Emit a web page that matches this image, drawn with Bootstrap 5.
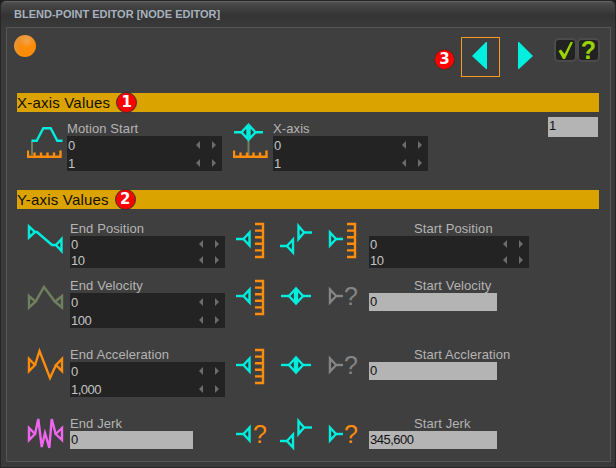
<!DOCTYPE html>
<html lang="en">
<head>
  <meta charset="UTF-8">
  <title>Blend-Point Editor</title>
  <link href="https://cdn.jsdelivr.net/npm/bootstrap@5.3.0/dist/css/bootstrap.min.css" rel="stylesheet">
  <style>
    html, body { margin: 0; background: #1e1e1e; }
    body { font-family: "Liberation Sans", Arial, sans-serif; overflow: hidden; }

    .wnd {
      width: 616px; height: 468px;
      border: 1px solid #262626;
      border-radius: 6px 6px 0 0;
      background: #3a3a3a;
      overflow: hidden;
    }
    .wnd-title {
      height: 26px; padding: 7px 0 0 13px;
      background: linear-gradient(#666 0, #4a4a4a 2px, #343434 14px, #3a3a3a 26px);
      color: #a8b2be;
      font-size: 11px; font-weight: 700; line-height: 13px;
    }
    .wnd-panel {
      width: 605px; height: 435px; margin-left: 5px;
      border: 1px solid #565656;
      background: #3f3f3f;
    }

    .top-strip { height: 65px; padding: 7px 10px 0 7px; }
    .ball {
      width: 22px; height: 22px; border-radius: 50%;
      background:
        radial-gradient(circle at 58% 26%, #f4a250 0, #f4a25000 36%),
        radial-gradient(circle at 66% 66%, #ff8c05 0, #fb8c08 38%, #d89c58 100%);
    }
    .nav-arrow {
      width: 39px; height: 40px; margin-top: 2px; padding: 0;
      border: 1px solid transparent; border-radius: 0;
    }
    .nav-arrow.picked, .nav-arrow.picked:hover { border-color: #ff9a1e; }
    .nav-arrow svg { display: block; }
    .next-arrow { margin: 2px 9px 0 6px; }
    .tool-btn {
      width: 23px; height: 24px; margin-top: 3px; padding: 0;
      display: flex; align-items: center; justify-content: center;
      background: #222; border: 2px solid #4b4b4b; border-radius: 5px;
      color: #9ad400; font-size: 25px; font-weight: 700; line-height: 1;
    }
    .num-mark {
      width: 21px; height: 21px; padding: 0;
      display: inline-flex; align-items: center; justify-content: center;
      background: #f00; border: 1px solid #333;
      color: #fff; font-size: 15px; font-weight: 700; line-height: 1;
      font-family: "DejaVu Sans", sans-serif;
    }
    .top-mark { margin: 14px 6px 0 0; }
    .head-bar {
      width: 582px; height: 19px; margin-left: 10px;
      display: flex; align-items: center; gap: 6px;
      background: #dba300;
      color: #140f00; font-size: 15px; letter-spacing: .2px; line-height: 19px;
    }

    .x-row { display: flex; padding-left: 20px; height: 59px; margin-bottom: 19px; }
    .x-icon { width: 40px; }
    .x-block { width: 155px; padding-top: 9px; margin-right: 11px; }
    .x-one { width: 50px; margin: 5px 0 0 120px; }

    .y-rows { padding: 12px 0 0 20px; }
    .y-row {
      display: grid;
      grid-template-columns: 43px 155px 53px 49px 42px 160px;
      align-items: start;
    }
    .y-row svg, .x-row svg { display: block; overflow: visible; }
    .gap-s { margin-bottom: 10px; }
    .gap-l { margin-bottom: 19px; }

    .fld-label { height: 15px; color: #b4b4b4; font-size: 13px; letter-spacing: .1px; line-height: 15px; white-space: nowrap; }
    .fld-label.shifted { padding-left: 45px; }
    .spin-box { height: 35px; background: #232323; color: #c4c4c4; overflow: hidden; }
    .spin-box.short { height: 32px; }
    .spin-line {
      height: 18px; padding: 0 6px 0 1px;
      display: flex; align-items: center; justify-content: space-between;
      font-size: 13px; letter-spacing: -.5px; line-height: 15px;
    }
    .spin-box.short .spin-line { height: 16px; }
    .spin-arrows { display: flex; gap: 12px; }
    .spin-arrows i { display: block; width: 0; height: 0; border: 4px solid transparent; border-left-width: 0; border-right: 4px solid #6c6c6c; }
    .spin-arrows i + i { border-right-width: 0; border-left: 4px solid #6c6c6c; }
    .grey-fld {
      height: 18px; padding-left: 1px;
      background: #b4b4b4; color: #111;
      font-size: 13px; letter-spacing: -.5px; line-height: 18px;
    }
    .w-123 { width: 123px; }
    .w-128 { width: 128px; }
    .grey-fld.tall { height: 20px; line-height: 17px; }

    .cy { fill: #2e3a3a; stroke: #00eede; stroke-width: 2.4; }
    .cy-line { fill: none; stroke: #00eede; stroke-width: 2.4; }
    .or-line { fill: none; stroke: #ff8c0a; stroke-width: 2.4; }
    .gr { fill: #333; stroke: #858585; stroke-width: 2.4; }
    .gr-line { fill: none; stroke: #858585; stroke-width: 2.4; }
    .stem { stroke: #6f8060; stroke-width: 2; }
    .qm { font-family: "Liberation Sans", sans-serif; font-size: 25px; }
  </style>
</head>
<body>
  <svg width="0" height="0" class="position-absolute">
    <defs>
      <symbol id="ruler-h" viewBox="0 0 40 50" width="40" height="50">
        <path class="or-line" d="M1 38.5V44.7H33.5V38.5M7.5 40.5V44.7M14 40.5V44.7M20.5 40.5V44.7M27 40.5V44.7"/>
      </symbol>
      <symbol id="tri-l" viewBox="0 0 53 44" width="53" height="44">
        <path class="cy-line" d="M11 18H19"/><path class="cy" d="M18.5 18L24.5 11.5V24.5Z"/>
      </symbol>
      <symbol id="rul-c" viewBox="0 0 53 44" width="53" height="44">
        <path class="or-line" d="M30 3H38V36H30M30 9.6H38M30 16.2H38M30 22.8H38M30 29.4H38"/>
      </symbol>
      <symbol id="split" viewBox="0 0 49 44" width="49" height="44">
        <path class="cy" d="M20.5 5V18L26 11.5Z"/><path class="cy-line" d="M26 11.5H34"/>
        <path class="cy-line" d="M2 25H9"/><path class="cy" d="M9 25L15 18.5V31.5Z"/>
      </symbol>
      <symbol id="both" viewBox="0 0 49 44" width="49" height="44">
        <path class="cy-line" d="M3 18H33"/><path class="cy" d="M11 18L17 11.5V24.5Z"/><path class="cy" d="M19 11.5V24.5L25 18Z"/>
      </symbol>
      <symbol id="rul-e" viewBox="0 0 42 44" width="42" height="44">
        <path class="or-line" d="M20 3H28V36H20M20 9.6H28M20 16.2H28M20 22.8H28M20 29.4H28"/>
      </symbol>
      <symbol id="tri-r" viewBox="0 0 42 44" width="42" height="44">
        <path class="cy" d="M3 11.5V24.5L9 18Z"/><path class="cy-line" d="M9 18H16"/>
      </symbol>
      <symbol id="tri-r-grey" viewBox="0 0 42 44" width="42" height="44">
        <path class="gr" d="M3 11.5V24.5L9 18Z"/><path class="gr-line" d="M9 18H16"/>
      </symbol>
    </defs>
  </svg>

  <div class="wnd">
    <div class="wnd-title">BLEND-POINT EDITOR [NODE EDITOR]</div>
    <div class="wnd-panel">

      <div class="top-strip d-flex align-items-start">
        <div class="ball"></div>
        <div class="ms-auto d-flex align-items-start">
          <span class="badge rounded-circle num-mark top-mark">3</span>
          <button class="btn nav-arrow picked" type="button" aria-label="Previous">
            <svg width="37" height="38" viewBox="462 38 37 38"><polygon points="472,56 486,42 487,42 487,69 486,69" fill="#00f0e0"/></svg>
          </button>
          <button class="btn nav-arrow next-arrow" type="button" aria-label="Next">
            <svg width="37" height="38" viewBox="507 38 37 38"><polygon points="518,42 519,42 533,56 519,69 518,69" fill="#00f0e0"/></svg>
          </button>
          <button class="btn tool-btn" type="button" aria-label="OK">
            <svg width="17" height="19" viewBox="557 40 17 19"><polygon points="558.5,50 561,48.5 564.5,53 570.5,41 573,41 565,58 563,58" fill="#9ad400"/></svg>
          </button>
          <button class="btn tool-btn" type="button">?</button>
        </div>
      </div>

      <div class="head-bar">X-axis Values <span class="badge rounded-circle num-mark">1</span></div>
      <div class="x-row">
        <div class="x-icon">
          <svg width="40" height="50" viewBox="0 0 40 50">
            <path class="stem" d="M5 29V43"/>
            <path class="cy-line" d="M4.5 28.7H9.7L16.3 16.3H23.7L30.3 28.7H35.5"/>
            <use href="#ruler-h"/>
          </svg>
        </div>
        <div class="x-block">
          <div class="fld-label">Motion Start</div>
          <div class="spin-box">
            <div class="spin-line"><span>0</span><span class="spin-arrows"><i></i><i></i></span></div>
            <div class="spin-line"><span>1</span><span class="spin-arrows"><i></i><i></i></span></div>
          </div>
        </div>
        <div class="x-icon">
          <svg width="40" height="50" viewBox="0 0 40 50">
            <path class="stem" d="M15.5 28V46"/>
            <path class="cy-line" d="M1 20.3H30"/>
            <path class="cy" d="M8.5 20.3L14.5 13.8V26.8Z"/><path class="cy" d="M16.5 13.8V26.8L22.5 20.3Z"/>
            <use href="#ruler-h"/>
          </svg>
        </div>
        <div class="x-block m-0">
          <div class="fld-label">X-axis</div>
          <div class="spin-box">
            <div class="spin-line"><span>0</span><span class="spin-arrows"><i></i><i></i></span></div>
            <div class="spin-line"><span>1</span><span class="spin-arrows"><i></i><i></i></span></div>
          </div>
        </div>
        <div class="x-one"><div class="grey-fld tall">1</div></div>
      </div>

      <div class="head-bar">Y-axis Values <span class="badge rounded-circle num-mark">2</span></div>
      <div class="y-rows">

        <div class="y-row gap-s">
          <svg width="43" height="44" viewBox="0 0 43 44">
            <path class="cy-line" d="M8 11H10L25 24H29"/>
            <path class="cy" d="M2 5.5V16.5L8 11Z"/><path class="cy" d="M29 24L34.5 18V30Z"/>
          </svg>
          <div>
            <div class="fld-label">End Position</div>
            <div class="spin-box short">
              <div class="spin-line"><span>0</span><span class="spin-arrows"><i></i><i></i></span></div>
              <div class="spin-line"><span>10</span><span class="spin-arrows"><i></i><i></i></span></div>
            </div>
          </div>
          <svg width="53" height="44" viewBox="0 0 53 44"><use href="#tri-l"/><use href="#rul-c"/></svg>
          <svg width="49" height="44" viewBox="0 0 49 44"><use href="#split"/></svg>
          <svg width="42" height="44" viewBox="0 0 42 44"><use href="#tri-r"/><use href="#rul-e"/></svg>
          <div>
            <div class="fld-label shifted">Start Position</div>
            <div class="spin-box short">
              <div class="spin-line"><span>0</span><span class="spin-arrows"><i></i><i></i></span></div>
              <div class="spin-line"><span>10</span><span class="spin-arrows"><i></i><i></i></span></div>
            </div>
          </div>
        </div>

        <div class="y-row gap-l">
          <svg width="43" height="44" viewBox="0 0 43 44" fill="none" stroke="#6f8060" stroke-width="2.4">
            <path d="M2 18V29.5L8.5 23.7Z"/><path d="M8.5 23.7L17 9L28 23.7"/><path d="M28 23.7L35 18V29.5Z"/>
          </svg>
          <div>
            <div class="fld-label">End Velocity</div>
            <div class="spin-box">
              <div class="spin-line"><span>0</span><span class="spin-arrows"><i></i><i></i></span></div>
              <div class="spin-line"><span>100</span><span class="spin-arrows"><i></i><i></i></span></div>
            </div>
          </div>
          <svg width="53" height="44" viewBox="0 0 53 44"><use href="#tri-l"/><use href="#rul-c"/></svg>
          <svg width="49" height="44" viewBox="0 0 49 44"><use href="#both"/></svg>
          <svg width="42" height="44" viewBox="0 0 42 44"><use href="#tri-r-grey"/><text class="qm" x="17" y="27" fill="#858585">?</text></svg>
          <div>
            <div class="fld-label shifted">Start Velocity</div>
            <div class="grey-fld w-128">0</div>
          </div>
        </div>

        <div class="y-row gap-l">
          <svg width="43" height="44" viewBox="0 0 43 44" fill="none" stroke="#ff8c0a" stroke-width="2.4">
            <path d="M2 12V24L8 18Z"/><path d="M8 18L12.5 4L23 31L29 18"/><path d="M29 18L35 12V24Z"/>
          </svg>
          <div>
            <div class="fld-label">End Acceleration</div>
            <div class="spin-box">
              <div class="spin-line"><span>0</span><span class="spin-arrows"><i></i><i></i></span></div>
              <div class="spin-line"><span>1,000</span><span class="spin-arrows"><i></i><i></i></span></div>
            </div>
          </div>
          <svg width="53" height="44" viewBox="0 0 53 44"><use href="#tri-l"/><use href="#rul-c"/></svg>
          <svg width="49" height="44" viewBox="0 0 49 44"><use href="#both"/></svg>
          <svg width="42" height="44" viewBox="0 0 42 44"><use href="#tri-r-grey"/><text class="qm" x="17" y="27" fill="#858585">?</text></svg>
          <div>
            <div class="fld-label shifted">Start Accleration</div>
            <div class="grey-fld w-128">0</div>
          </div>
        </div>

        <div class="y-row">
          <svg width="43" height="44" viewBox="0 0 43 44" fill="none" stroke="#ee66ee" stroke-width="2.4">
            <path d="M2 12V24L8 18Z"/><path d="M8 18L11.3 3L14.7 31L18 17L22.3 32L24.7 3L28.7 18"/><path d="M28.7 18L35 12V24Z"/>
          </svg>
          <div>
            <div class="fld-label">End Jerk</div>
            <div class="grey-fld w-123">0</div>
          </div>
          <svg width="53" height="44" viewBox="0 0 53 44"><use href="#tri-l"/><text class="qm" x="28" y="27" fill="#ff8c0a">?</text></svg>
          <svg width="49" height="44" viewBox="0 0 49 44"><use href="#split"/></svg>
          <svg width="42" height="44" viewBox="0 0 42 44"><use href="#tri-r"/><text class="qm" x="17" y="27" fill="#ff8c0a">?</text></svg>
          <div>
            <div class="fld-label shifted">Start Jerk</div>
            <div class="grey-fld w-128">345,600</div>
          </div>
        </div>

      </div>
    </div>
  </div>

  <script src="https://cdn.jsdelivr.net/npm/bootstrap@5.3.0/dist/js/bootstrap.bundle.min.js"></script>
</body>
</html>
